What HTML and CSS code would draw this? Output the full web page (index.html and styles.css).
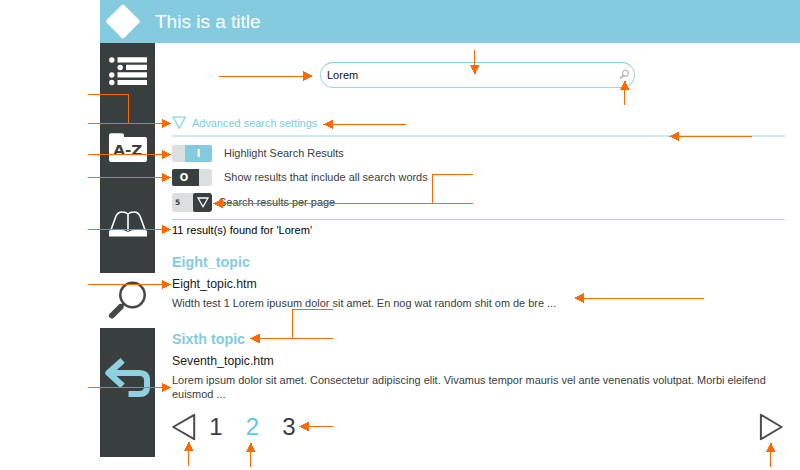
FILE: index.html
```html
<!DOCTYPE html>
<html lang="en">
<head>
<meta charset="utf-8">
<title>This is a title</title>
<link rel="stylesheet" href="styles.css">
</head>
<body>
<div class="app">
  <header class="header">
    <svg class="logo" width="36" height="36" viewBox="0 0 36 36"><rect x="5.4" y="4.9" width="25" height="25" rx="2" transform="rotate(45 17.9 17.4)" fill="#fff"/></svg>
    <h1 class="title">This is a title</h1>
  </header>
  <div class="body">
    <nav class="sidebar">
      <a class="item contents"><svg width="39" height="30" viewBox="0 0 39 30" fill="#fff"><circle cx="2.8" cy="3" r="2.7"/><circle cx="11.2" cy="10.5" r="2.7"/><circle cx="2.8" cy="18" r="2.7"/><circle cx="2.8" cy="25.5" r="2.7"/><path d="M8.5 .3h29.5v5.3H8.5zM17 7.8h21v5.3H17zM8.5 15.2h29.5v5.3H8.5zM8.5 23h29.5v5H8.5z"/></svg></a>
      <a class="item index"><svg width="39" height="30" viewBox="0 0 39 30"><path d="M0 2.5Q0 .3 2.2.3H13Q15 .3 15 2.5V4H36Q38 4 38 6V27Q38 29 36 29H2Q0 29 0 27Z" fill="#fff"/><text class="az" x="4.3" y="21.7" textLength="29" lengthAdjust="spacingAndGlyphs">A-Z</text></svg></a>
      <a class="item book"><svg width="39" height="27" viewBox="0 0 39 27"><path d="M1 21.5L7 5Q9 1 13 1Q17 1 19 3Q21 1 25 1Q29 1 31 5L37 21.5M19 3V20" fill="none" stroke="#fff" stroke-width="1.6"/><path d="M0 25.5V20Q3 18.8 9 18.8Q16 18.8 19 21Q22 18.8 29 18.8Q35 18.8 38 20V25.5Z" fill="#fff"/></svg></a>
      <a class="item search"><svg width="39" height="39" viewBox="0 0 39 39" fill="none" stroke="#444747"><circle cx="23.5" cy="14" r="12.2" stroke-width="2.5"/><path d="M14.8 22.7L12 25.5" stroke-width="3"/><path d="M11.5 26L3 34.5" stroke-width="6" stroke-linecap="round"/></svg></a>
      <a class="item back"><svg width="46" height="39" viewBox="0 0 46 39" fill="none" stroke="#8dd0e3"><path d="M5 13H34Q42 13 42 20V27Q42 34 34 34H23.5" stroke-width="6"/><path d="M15.2 2.6L3.6 13L15.2 23.6" stroke-width="6.4" stroke-linecap="square" stroke-linejoin="round"/></svg></a>
    </nav>
    <main class="main">
      <div class="searchbox">
        <span>Lorem</span>
        <svg width="11" height="12" viewBox="0 0 11 12" fill="none" stroke="#b4b4b4"><circle cx="6.5" cy="4.2" r="2.9" stroke-width="1.1"/><path d="M4.4 6.3L1.2 9.5" stroke-width="1.8"/></svg>
      </div>
      <div class="advanced">
        <svg width="16" height="14" viewBox="0 0 16 14"><path d="M1.2 1H13.4L7.3 12.4Z" fill="none" stroke="#a0d8e6" stroke-width="1.6" stroke-linejoin="round"/></svg>
        <span>Advanced search settings</span>
      </div>
      <div class="settings">
        <div class="row"><span class="switch on"><b>I</b></span><span class="label">Highlight Search Results</span></div>
        <div class="row second"><span class="switch off"><b>O</b></span><span class="label">Show results that include all search words</span></div>
        <div class="row third"><span class="select"><b class="count">5</b><span class="drop"><svg width="12" height="11" viewBox="0 0 12 11"><path d="M1 1H11L6 9.7Z" fill="none" stroke="#fff" stroke-width="1.3"/></svg></span></span><span class="label">Search results per page</span></div>
      </div>
      <p class="found">11 result(s) found for 'Lorem'</p>
      <article class="result">
        <h2>Eight_topic</h2>
        <p class="file">Eight_topic.htm</p>
        <p class="excerpt">Width test 1 Lorem ipusum dolor sit amet. En nog wat random shit om de bre ...</p>
      </article>
      <article class="result next">
        <h2>Sixth topic</h2>
        <p class="file">Seventh_topic.htm</p>
        <p class="excerpt long">Lorem ipsum dolor sit amet. Consectetur adipiscing elit. Vivamus tempor mauris vel ante venenatis volutpat. Morbi eleifend<br>euismod ...</p>
      </article>
      <div class="pager">
        <svg width="25" height="28" viewBox="0 0 25 28"><path d="M1.2 14L22.2 1.8V26.2Z" fill="none" stroke="#4a4d4d" stroke-width="2" stroke-linejoin="round"/></svg>
        <span class="page first">1</span><span class="page current">2</span><span class="page">3</span>
        <svg class="forward" width="25" height="28" viewBox="0 0 25 28"><path d="M21.6 14L.9 1.8V26.2Z" fill="none" stroke="#4a4d4d" stroke-width="2" stroke-linejoin="round"/></svg>
      </div>
    </main>
  </div>
</div>
<svg class="callouts" width="800" height="470" viewBox="0 0 800 470">
  <defs>
    <path id="head" d="M0 0L-10 -4.8V4.8Z"/>
  </defs>
  <path class="wire" d="M219 76.5H305M88 94.5H128.5V123M88 123.5H163M88 154.5H163M88 177.5H163M88 229.5H163M88 284.5H163M88 387.5H163M331 124.5H406M677 136.5H752M221 203.5H473M432.5 203V174.5H473M258 338.5H333M292.5 338V309.5H333M307 426.5H333M582 298.5H704M474.5 50V67M624.5 88V105M188.5 449V466M250.5 450V467M770.5 450V467"/>
  <g class="heads">
    <use href="#head" x="313" y="76"/>
    <use href="#head" x="171.5" y="123.5"/><use href="#head" x="171.5" y="154.5"/><use href="#head" x="171.5" y="177.5"/><use href="#head" x="171.5" y="229.5"/><use href="#head" x="171.5" y="284.5"/><use href="#head" x="171.5" y="387.5"/>
    <use href="#head" transform="translate(323 124.3) rotate(180)"/>
    <use href="#head" transform="translate(669 136.3) rotate(180)"/>
    <use href="#head" transform="translate(213 203.5) rotate(180)"/>
    <use href="#head" transform="translate(250 338.5) rotate(180)"/>
    <use href="#head" transform="translate(299 426.5) rotate(180)"/>
    <use href="#head" transform="translate(574 298) rotate(180)"/>
    <use href="#head" transform="translate(474.8 75) rotate(90)"/>
    <use href="#head" transform="translate(624.8 80) rotate(-90)"/>
    <use href="#head" transform="translate(188.8 441) rotate(-90)"/>
    <use href="#head" transform="translate(250.8 442) rotate(-90)"/>
    <use href="#head" transform="translate(770.8 442) rotate(-90)"/>
  </g>
</svg>
</body>
</html>
```
FILE: styles.css
```css
* { box-sizing: border-box; margin: 0; padding: 0; }
body { width: 800px; height: 470px; overflow: hidden; background: #fff; color: #393d3d; font-family: "Liberation Sans", Arial, sans-serif; font-size: 11px; }
svg { display: block; flex: none; overflow: visible; }
.app { margin-left: 100px; }
.header { display: flex; align-items: center; height: 43px; padding-left: 5px; background: #84cbdf; }
.title { margin-left: 14px; color: #fff; font-size: 19px; font-weight: normal; line-height: 43px; }
.body { display: flex; }
.sidebar { width: 55px; height: 414px; background: #393f3f; }
.item { display: flex; justify-content: flex-start; padding-left: 9px; }
.contents { height: 77px; padding-top: 14px; }
.index { height: 76px; padding-top: 13px; }
.az { font: bold 14px "DejaVu Sans", sans-serif; fill: #393f3f; }
.book { height: 77px; padding-top: 15px; }
.search { height: 55px; padding-top: 8px; background: #fff; }
.back { padding: 32px 0 0 5px; }
.main { flex: 1; padding: 19px 15px 0 17px; }
.searchbox { display: flex; align-items: center; justify-content: space-between; width: 315px; height: 26px; margin-left: 148px; padding: 0 4px 0 6px; border: 1px solid #a0d8e6; border-top-color: #84cbdf; border-radius: 13px; color: #111; }
.advanced { display: flex; align-items: center; gap: 4px; height: 49px; padding-top: 23px; border-bottom: 2px solid #cdecf2; color: #7ecbdd; font-size: 10.95px; }
.settings { height: 83px; padding-top: 8px; border-bottom: 1px solid #a5dce5; }
.row { display: flex; align-items: flex-start; height: 18px; font-size: 10.95px; }
.second { margin-top: 6px; }
.third { margin-top: 6px; height: 19px; }
.label { margin-left: 12px; line-height: 17px; }
.third .label { margin-left: 7px; line-height: 19px; }
.switch { display: flex; width: 40px; height: 17px; overflow: hidden; border-radius: 2px; background: #dbdfdf; }
.switch b { width: 27px; color: #fff; font: bold 10px/17px "DejaVu Sans", sans-serif; text-align: center; }
.on { justify-content: flex-end; }
.on b { background: #84cbdf; }
.off b { width: 27px; padding-right: 3px; background: #393f3f; }
.select { display: flex; width: 40px; height: 19px; overflow: hidden; border-radius: 3px; background: #dbdfdf; }
.count { width: 21px; padding-left: 3px; font: bold 7.5px/19px "DejaVu Sans", sans-serif; }
.drop { display: flex; align-items: center; justify-content: center; width: 19px; border-radius: 2px; background: #393f3f; }
.found { height: 20px; color: #000; font-size: 11px; letter-spacing: 0.03px; line-height: 21px; }
.result { padding-top: 12px; }
.result h2 { color: #84cbdf; font-size: 14.3px; line-height: 20px; }
.file { padding-top: 1px; font-size: 12.3px; line-height: 22px; color: #222; }
.excerpt { font-size: 10.95px; line-height: 16px; white-space: nowrap; }
.next { padding-top: 18px; }
.long { padding-top: 1px; line-height: 14px; }
.pager { display: flex; align-items: center; height: 28px; margin-top: 12px; }
.page { width: 36.5px; text-align: center; color: #393d3d; font-size: 24px; line-height: 28px; }
.first { margin-left: 0.8px; }
.current { color: #5bc5f2; }
.forward { margin-left: auto; }
.callouts { position: absolute; left: 0; top: 0; pointer-events: none; }
.wire { fill: none; stroke: #ff6a00; stroke-width: 1; shape-rendering: crispEdges; }
.heads { fill: #ff6a00; shape-rendering: crispEdges; }
```
